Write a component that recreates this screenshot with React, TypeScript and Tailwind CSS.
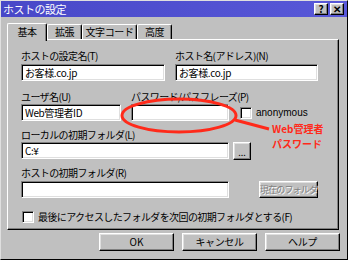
const raised =
  'border border-t-white border-l-white border-b-black border-r-black shadow-[inset_-1px_-1px_#808080,inset_1px_1px_#dfdfdf] bg-[#c0c0c0]'
const sunken =
  'border border-t-[#808080] border-l-[#808080] border-b-white border-r-white shadow-[inset_1px_1px_#000,inset_-1px_-1px_#dfdfdf] bg-white'

function Field({ w, value = '' }: { w: string; value?: string }) {
  return (
    <div className={`${sunken} ${w} h-[17px] flex items-center pl-[3px] text-[10px] tracking-[-0.4px] leading-none text-black whitespace-nowrap`}>
      {value}
    </div>
  )
}

function Label({ children }: { children: React.ReactNode }) {
  return <div className="h-[13px] text-[10px] tracking-[-0.6px] leading-[13px] text-black whitespace-nowrap">{children}</div>
}

function Check() {
  return <div className={`${sunken} w-[12px] h-[12px] shrink-0`} />
}

function Tab({ label, active, w }: { label: string; active?: boolean; w: string }) {
  return (
    <div
      className={`${w} ${
        active ? 'h-[18px] -mb-[2px] z-10 bg-[#c0c0c0]' : 'h-[15px]'
      } border border-b-0 border-t-white border-l-white border-r-black rounded-t-[2px] shadow-[inset_-1px_0_#808080] flex items-center justify-center text-[10px] tracking-[-0.4px] leading-none whitespace-nowrap pb-[1px]`}
    >
      {label}
    </div>
  )
}

export default function App() {
  return (
    <div
      className="relative w-[348px] h-[260px] bg-[#c0c0c0] border border-t-[#dfdfdf] border-l-[#dfdfdf] border-b-black border-r-black overflow-hidden"
      style={{ fontFamily: '"Noto Sans CJK JP", "Liberation Sans", sans-serif' }}
    >
      {/* title bar */}
      <div className="h-[16px] bg-gradient-to-r from-[#4848c8] to-[#5858d8] flex items-center justify-between pl-[2px] pr-[3px]">
        <span className="text-white text-[11px] tracking-[-0.5px] leading-none">ホストの設定</span>
        <div className="flex gap-[2px]">
          <div className={`${raised} w-[14px] h-[12px] flex items-center justify-center text-[10px] font-bold leading-none`}>?</div>
          <div className={`${raised} w-[14px] h-[12px] flex items-center justify-center text-[10px] font-bold leading-none`}>✕</div>
        </div>
      </div>

      <div className="px-[6px] pt-[5px]">
        {/* tabs */}
        <div className="flex items-end h-[17px] relative">
          <Tab label="基本" active w="w-[40px]" />
          <Tab label="拡張" w="w-[35px]" />
          <Tab label="文字コード" w="w-[55px]" />
          <Tab label="高度" w="w-[35px]" />
        </div>

        {/* panel */}
        <div className="h-[191px] w-[332px] border border-t-white border-l-white border-b-black border-r-black shadow-[inset_-1px_-1px_#808080] pl-[13px] pt-[9px]">
          <div className="flex gap-[10px]">
            <div className="flex flex-col gap-[2px]">
              <Label>ホストの設定名(T)</Label>
              <Field w="w-[144px]" value="お客様.co.jp" />
            </div>
            <div className="flex flex-col gap-[2px]">
              <Label>ホスト名(アドレス)(N)</Label>
              <Field w="w-[143px]" value="お客様.co.jp" />
            </div>
          </div>

          <div className="flex gap-[10px] mt-[9px]">
            <div className="flex flex-col gap-[1px]">
              <Label>ユーザ名(U)</Label>
              <Field w="w-[100px]" value="Web管理者ID" />
            </div>
            <div className="flex flex-col gap-[1px]">
              <Label>パスワード/パスフレーズ(P)</Label>
              <div className="flex items-center">
                <Field w="w-[98px]" />
                <div className="ml-[11px] flex items-center gap-[4px]">
                  <Check />
                  <span className="text-[10px] leading-none" style={{ fontFamily: '"Liberation Sans", sans-serif' }}>
                    anonymous
                  </span>
                </div>
              </div>
            </div>
          </div>

          <div className="flex flex-col gap-[1px] mt-[7px]">
            <Label>ローカルの初期フォルダ(L)</Label>
            <div className="flex gap-[4px]">
              <Field w="w-[208px]" value="C:¥" />
              <div className={`${raised} w-[18px] h-[18px] flex items-end justify-center text-[9px] leading-[12px]`}>...</div>
            </div>
          </div>

          <div className="flex flex-col gap-[1px] mt-[6px]">
            <Label>ホストの初期フォルダ(R)</Label>
            <div className="flex gap-[30px] mt-[1px]">
              <Field w="w-[208px]" />
              <div className={`${raised} w-[59px] h-[17px] flex items-center justify-center text-[9px] tracking-[-0.8px] whitespace-nowrap leading-none text-[#808080] [text-shadow:1px_1px_#fff]`}>
                現在のフォルダ
              </div>
            </div>
          </div>

          <div className="flex items-center gap-[4px] mt-[13px] ml-[1px]">
            <Check />
            <span className="text-[10px] tracking-[-0.6px] leading-none whitespace-nowrap">最後にアクセスしたフォルダを次回の初期フォルダとする(F)</span>
          </div>
        </div>

        {/* buttons */}
        <div className="flex justify-end gap-[8px] mt-[3px] pr-[1px]">
          <div className={`${raised} w-[75px] h-[18px] flex items-center justify-center text-[10px] leading-none`}>OK</div>
          <div className={`${raised} w-[75px] h-[18px] flex items-center justify-center text-[10px] tracking-[-0.4px] leading-none`}>キャンセル</div>
          <div className={`${raised} w-[75px] h-[18px] flex items-center justify-center text-[10px] tracking-[-0.4px] leading-none`}>ヘルプ</div>
        </div>
      </div>

      {/* red annotation */}
      <svg className="absolute left-0 top-0 pointer-events-none" width="348" height="260">
        <ellipse cx="178" cy="114.5" rx="57" ry="16.5" fill="none" stroke="#ff2a1a" strokeWidth="3" />
        <line x1="234" y1="119" x2="268" y2="128" stroke="#ff2a1a" strokeWidth="3" />
      </svg>
      <div className="absolute left-[271px] top-[120px] flex flex-col text-[#ff2a1a] text-[10px] leading-[15px] font-bold">
        <span>Web管理者</span>
        <span>パスワード</span>
      </div>
    </div>
  )
}
